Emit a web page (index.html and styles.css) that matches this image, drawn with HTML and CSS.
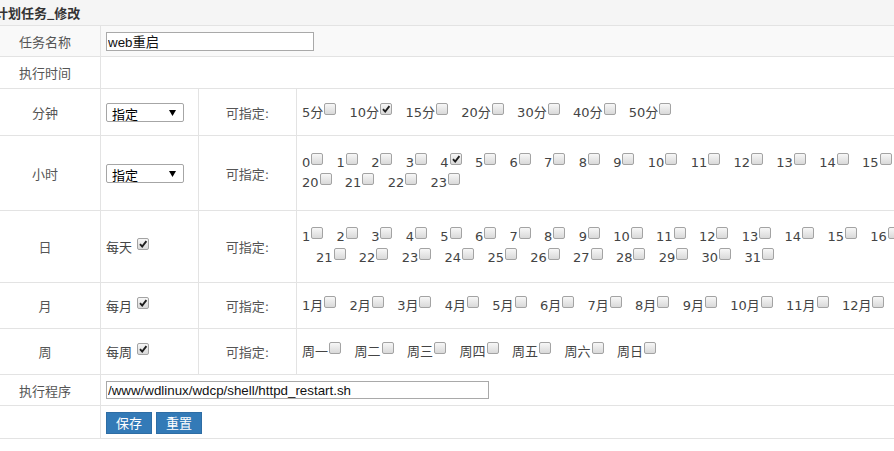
FILE: index.html
```html
<!DOCTYPE html>
<html lang="zh-CN">
<head>
<meta charset="utf-8">
<title>计划任务_修改</title>
<link rel="stylesheet" href="styles.css">
</head>
<body>
<div class="page">
  <div class="title">计划任务_修改</div>
  <form class="grid">
    <div class="cell lab shade">任务名称</div>
    <div class="cell val span3 shade"><input class="txt name" type="text" value="web重启"></div>

    <div class="cell lab">执行时间</div>
    <div class="cell val span3"></div>

    <div class="cell lab">分钟</div>
    <div class="cell val c2"><span class="sel"><select><option>指定</option></select><svg class="arr" viewBox="0 0 7 6"><polygon points="0,0 7,0 3.5,6"/></svg></span></div>
    <div class="cell c3">可指定:</div>
    <div class="cell opts">
      <div class="line"><label class="opt">5分<span class="cb"></span></label><label class="opt">10分<span class="cb on"><svg viewBox="0 0 10 10"><path d="M2 5.2 4.2 7.6 8.4 2.2"/></svg></span></label><label class="opt">15分<span class="cb"></span></label><label class="opt">20分<span class="cb"></span></label><label class="opt">30分<span class="cb"></span></label><label class="opt">40分<span class="cb"></span></label><label class="opt">50分<span class="cb"></span></label></div>
    </div>

    <div class="cell lab">小时</div>
    <div class="cell val c2"><span class="sel"><select><option>指定</option></select><svg class="arr" viewBox="0 0 7 6"><polygon points="0,0 7,0 3.5,6"/></svg></span></div>
    <div class="cell c3">可指定:</div>
    <div class="cell opts">
      <div class="line hl"><label class="opt">0<span class="cb"></span></label><label class="opt">1<span class="cb"></span></label><label class="opt">2<span class="cb"></span></label><label class="opt">3<span class="cb"></span></label><label class="opt">4<span class="cb on"><svg viewBox="0 0 10 10"><path d="M2 5.2 4.2 7.6 8.4 2.2"/></svg></span></label><label class="opt">5<span class="cb"></span></label><label class="opt">6<span class="cb"></span></label><label class="opt">7<span class="cb"></span></label><label class="opt">8<span class="cb"></span></label><label class="opt">9<span class="cb"></span></label><label class="opt">10<span class="cb"></span></label><label class="opt">11<span class="cb"></span></label><label class="opt">12<span class="cb"></span></label><label class="opt">13<span class="cb"></span></label><label class="opt">14<span class="cb"></span></label><label class="opt">15<span class="cb"></span></label></div>
      <div class="line hl"><label class="opt">20<span class="cb"></span></label><label class="opt">21<span class="cb"></span></label><label class="opt">22<span class="cb"></span></label><label class="opt">23<span class="cb"></span></label></div>
    </div>

    <div class="cell lab">日</div>
    <div class="cell val c2"><label class="every">每天 <span class="cb on"><svg viewBox="0 0 10 10"><path d="M2 5.2 4.2 7.6 8.4 2.2"/></svg></span></label></div>
    <div class="cell c3">可指定:</div>
    <div class="cell opts">
      <div class="line"><label class="opt">1<span class="cb"></span></label><label class="opt">2<span class="cb"></span></label><label class="opt">3<span class="cb"></span></label><label class="opt">4<span class="cb"></span></label><label class="opt">5<span class="cb"></span></label><label class="opt">6<span class="cb"></span></label><label class="opt">7<span class="cb"></span></label><label class="opt">8<span class="cb"></span></label><label class="opt">9<span class="cb"></span></label><label class="opt">10<span class="cb"></span></label><label class="opt">11<span class="cb"></span></label><label class="opt">12<span class="cb"></span></label><label class="opt">13<span class="cb"></span></label><label class="opt">14<span class="cb"></span></label><label class="opt">15<span class="cb"></span></label><label class="opt">16<span class="cb"></span></label></div>
      <div class="line indent"><label class="opt">21<span class="cb"></span></label><label class="opt">22<span class="cb"></span></label><label class="opt">23<span class="cb"></span></label><label class="opt">24<span class="cb"></span></label><label class="opt">25<span class="cb"></span></label><label class="opt">26<span class="cb"></span></label><label class="opt">27<span class="cb"></span></label><label class="opt">28<span class="cb"></span></label><label class="opt">29<span class="cb"></span></label><label class="opt">30<span class="cb"></span></label><label class="opt">31<span class="cb"></span></label></div>
    </div>

    <div class="cell lab">月</div>
    <div class="cell val c2"><label class="every">每月 <span class="cb on"><svg viewBox="0 0 10 10"><path d="M2 5.2 4.2 7.6 8.4 2.2"/></svg></span></label></div>
    <div class="cell c3">可指定:</div>
    <div class="cell opts">
      <div class="line"><label class="opt">1月<span class="cb"></span></label><label class="opt">2月<span class="cb"></span></label><label class="opt">3月<span class="cb"></span></label><label class="opt">4月<span class="cb"></span></label><label class="opt">5月<span class="cb"></span></label><label class="opt">6月<span class="cb"></span></label><label class="opt">7月<span class="cb"></span></label><label class="opt">8月<span class="cb"></span></label><label class="opt">9月<span class="cb"></span></label><label class="opt">10月<span class="cb"></span></label><label class="opt">11月<span class="cb"></span></label><label class="opt">12月<span class="cb"></span></label></div>
    </div>

    <div class="cell lab">周</div>
    <div class="cell val c2"><label class="every">每周 <span class="cb on"><svg viewBox="0 0 10 10"><path d="M2 5.2 4.2 7.6 8.4 2.2"/></svg></span></label></div>
    <div class="cell c3">可指定:</div>
    <div class="cell opts">
      <div class="line wk"><label class="opt">周一<span class="cb"></span></label><label class="opt">周二<span class="cb"></span></label><label class="opt">周三<span class="cb"></span></label><label class="opt">周四<span class="cb"></span></label><label class="opt">周五<span class="cb"></span></label><label class="opt">周六<span class="cb"></span></label><label class="opt">周日<span class="cb"></span></label></div>
    </div>

    <div class="cell lab">执行程序</div>
    <div class="cell val span3"><input class="txt path" type="text" value="/www/wdlinux/wdcp/shell/httpd_restart.sh"></div>

    <div class="cell lab"></div>
    <div class="cell val span3 btns"><button type="button" class="btn">保存</button><button type="button" class="btn">重置</button></div>
  </form>
</div>
</body>
</html>
```

FILE: styles.css
```css
html, body {
  margin: 0;
  padding: 0;
  overflow: hidden;
  background: #fff;
}

body {
  font: 13px "DejaVu Sans", "Noto Sans CJK SC", sans-serif;
  color: #444;
}

.page {
  width: 1110px;
  margin-left: -10px;
}

.title {
  height: 26px;
  box-sizing: border-box;
  padding-left: 5px;
  display: flex;
  align-items: center;
  background: #f5f5f5;
  border-bottom: 1px solid #e3e3e3;
  font: bold 13px "Noto Sans CJK SC", sans-serif;
  color: #333;
}

.grid {
  display: grid;
  grid-template-columns: 111px 98px 98px 1fr;
  grid-template-rows: 31px 32px 47px 75px 72px 46px 46px 31px 33px;
  margin: 0;
}

.cell {
  box-sizing: border-box;
  border-bottom: 1px solid #e3e3e3;
  display: flex;
  align-items: center;
  min-width: 0;
}

.shade {
  background: #f9f9f9;
}

.lab {
  justify-content: center;
  border-right: 1px solid #e3e3e3;
  color: #555;
  font-family: "Noto Sans CJK SC", sans-serif;
}

.val {
  padding-left: 5px;
}

.span3 {
  grid-column: span 3;
}

.c2 {
  border-right: 1px solid #e3e3e3;
}

.c3 {
  justify-content: center;
  border-right: 1px solid #e3e3e3;
  color: #555;
}

.opts {
  flex-direction: column;
  align-items: flex-start;
  justify-content: center;
  padding-left: 5px;
  overflow: hidden;
}

.line {
  white-space: nowrap;
  line-height: 21px;
}

.line.hl {
  line-height: 20px;
}

.line.indent {
  padding-left: 14px;
}

.line.wk .cb {
  margin-right: 13.5px;
}

.opt {
  color: #444;
}

.cb {
  display: inline-block;
  position: relative;
  width: 12px;
  height: 12px;
  box-sizing: border-box;
  border: 1px solid #a3a3a3;
  border-radius: 2px;
  background: linear-gradient(#f7f7f7, #d9d9d9);
  vertical-align: baseline;
  margin: 0 13.3px 2px 1px;
}

.cb svg {
  position: absolute;
  left: 0;
  top: 0;
  width: 10px;
  height: 10px;
  fill: none;
  stroke: #1e1e1e;
  stroke-width: 1.9;
}

.every {
  color: #444;
  font-family: "Noto Sans CJK SC", sans-serif;
}

.every .cb {
  margin-left: 2px;
}

.sel {
  position: relative;
  display: inline-flex;
}

.sel select {
  appearance: none;
  -webkit-appearance: none;
  width: 78px;
  height: 19px;
  box-sizing: border-box;
  border: 1px solid #a6a6a6;
  border-radius: 2px;
  background: #fff;
  color: #000;
  font: 13px "Noto Sans CJK SC", sans-serif;
  padding: 0 0 0 5px;
  margin: 0;
}

.sel .arr {
  position: absolute;
  right: 8px;
  top: 7px;
  width: 7px;
  height: 6px;
  fill: #000;
  pointer-events: none;
}

.txt {
  box-sizing: border-box;
  border: 1px solid #a9a9a9;
  background: #fff;
  color: #111;
  font: 13.33px "Liberation Sans", "Noto Sans CJK SC", sans-serif;
  padding: 0 1px;
  margin: 0;
}

.txt.name {
  width: 208px;
  height: 19px;
}

.txt.path {
  width: 383px;
  height: 18px;
}

.btns {
  gap: 4px;
  padding-top: 1px;
}

.btn {
  width: 46px;
  height: 22px;
  padding: 0;
  margin: 0;
  border: 1px solid #2e6da4;
  background: #337ab7;
  color: #fff;
  font: 13px "Noto Sans CJK SC", sans-serif;
  line-height: 20px;
}
```
